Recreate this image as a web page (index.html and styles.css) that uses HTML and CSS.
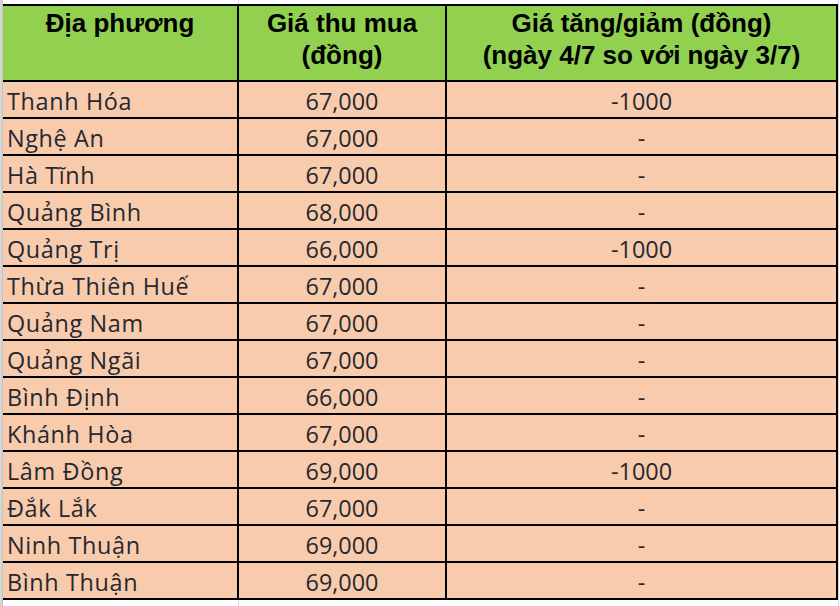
FILE: index.html
```html
<!DOCTYPE html>
<html lang="vi">
<head>
<meta charset="utf-8">
<title>Giá thu mua</title>
<link rel="stylesheet" href="styles.css">
</head>
<body>
<div class="sheet">
  <div class="gutter"></div>
  <div class="main">
    <table class="prices">
      <colgroup>
        <col class="c1"><col class="c2"><col class="c3">
      </colgroup>
      <thead>
        <tr class="head">
          <th>Địa phương</th>
          <th>Giá thu mua<br>(đồng)</th>
          <th>Giá tăng/giảm (đồng)<br>(ngày 4/7 so với ngày 3/7)</th>
        </tr>
      </thead>
      <tbody>
        <tr><td class="name">Thanh Hóa</td><td class="num">67,000</td><td class="num">-1000</td></tr>
        <tr><td class="name">Nghệ An</td><td class="num">67,000</td><td class="num">-</td></tr>
        <tr><td class="name">Hà Tĩnh</td><td class="num">67,000</td><td class="num">-</td></tr>
        <tr><td class="name">Quảng Bình</td><td class="num">68,000</td><td class="num">-</td></tr>
        <tr><td class="name">Quảng Trị</td><td class="num">66,000</td><td class="num">-1000</td></tr>
        <tr><td class="name">Thừa Thiên Huế</td><td class="num">67,000</td><td class="num">-</td></tr>
        <tr><td class="name">Quảng Nam</td><td class="num">67,000</td><td class="num">-</td></tr>
        <tr><td class="name">Quảng Ngãi</td><td class="num">67,000</td><td class="num">-</td></tr>
        <tr><td class="name">Bình Định</td><td class="num">66,000</td><td class="num">-</td></tr>
        <tr><td class="name">Khánh Hòa</td><td class="num">67,000</td><td class="num">-</td></tr>
        <tr><td class="name">Lâm Đồng</td><td class="num">69,000</td><td class="num">-1000</td></tr>
        <tr><td class="name">Đắk Lắk</td><td class="num">67,000</td><td class="num">-</td></tr>
        <tr><td class="name">Ninh Thuận</td><td class="num">69,000</td><td class="num">-</td></tr>
        <tr><td class="name">Bình Thuận</td><td class="num">69,000</td><td class="num">-</td></tr>
      </tbody>
    </table>
  </div>
</div>
</body>
</html>
```

FILE: styles.css
```css
html, body {
  margin: 0;
  padding: 0;
  background: #ffffff;
}
.sheet {
  display: flex;
  width: 840px;
  height: 606px;
  overflow: hidden;
}
.gutter {
  width: 3px;
  flex: none;
  background: #d6d6d6;
  border-right: 1px solid #c4c4c4;
  box-sizing: border-box;
}
.main {
  flex: 1;
  padding-top: 4px;
  background:
    linear-gradient(to right, transparent 235px, #d9d9d9 235px, #d9d9d9 236px, transparent 236px),
    linear-gradient(to right, transparent 835px, #d9d9d9 835px, #d9d9d9 836px, transparent 836px);
}
.prices {
  border-collapse: collapse;
  table-layout: fixed;
  width: 834px;
  border-top: 2px solid #000;
}
.c1 { width: 235px; }
.c2 { width: 208px; }
.c3 { width: 391px; }
.prices th,
.prices td {
  border: 2px solid #000;
  box-sizing: border-box;
  padding: 0;
}
.prices tr > :first-child {
  border-left: none;
}
.prices th {
  background: #92d050;
  color: #000;
  font-family: "Liberation Sans", Arial, sans-serif;
  font-weight: bold;
  font-size: 26px;
  line-height: 32px;
  height: 76px;
  vertical-align: top;
  text-align: center;
  padding-top: 1px;
}
.prices td {
  background: #f8cbad;
  color: #252830;
  font-family: "Open Sans", "Noto Sans", sans-serif;
  font-size: 23.4px;
  line-height: 30px;
  height: 37px;
  vertical-align: bottom;
  padding-bottom: 1px;
}
.prices td.name {
  text-align: left;
  padding-left: 4px;
  letter-spacing: 0.65px;
}
.prices td.num {
  text-align: center;
}
```
